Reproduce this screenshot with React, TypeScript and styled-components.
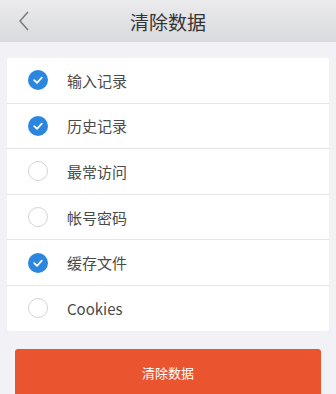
import React, { useState } from 'react';
import styled, { createGlobalStyle } from 'styled-components';

const GlobalStyle = createGlobalStyle`
  html, body {
    margin: 0;
    padding: 0;
    background: #f2f2f6;
    font-family: "Noto Sans CJK SC", Roboto, "Noto Sans", sans-serif;
  }
`;

const Page = styled.div`
  width: 336px;
  height: 394px;
  overflow: hidden;
  background: #f2f2f6;
`;

const Header = styled.header`
  height: 42px;
  display: flex;
  align-items: center;
  justify-content: center;
  position: relative;
  background: linear-gradient(#ebebee, #d9dadd);
`;

const BackButton = styled.button`
  position: absolute;
  left: 12px;
  top: 9px;
  width: 24px;
  height: 24px;
  padding: 0;
  border: none;
  background: none;
  display: flex;
  align-items: center;
  justify-content: center;
`;

const Title = styled.h1`
  margin: 0;
  font-size: 19px;
  font-weight: 400;
  color: #333;
`;

const Card = styled.ul`
  list-style: none;
  margin: 16px 7px 0;
  padding: 0;
  background: #fff;
  border-radius: 2px;
  box-shadow: 0 0 1px rgba(0, 0, 0, 0.06);
`;

const Row = styled.li`
  height: 44.6px;
  display: flex;
  align-items: center;
  padding-left: 21px;
  gap: 19px;
  font-size: 15px;
  color: #4a4a4a;
  cursor: pointer;
  & + & {
    border-top: 1px solid #e6e6e8;
  }
`;

const Check = styled.span<{ $on: boolean }>`
  width: 20px;
  height: 20px;
  border-radius: 50%;
  box-sizing: border-box;
  display: flex;
  align-items: center;
  justify-content: center;
  background: ${(p) => (p.$on ? '#2b86df' : '#fff')};
  border: ${(p) => (p.$on ? 'none' : '1px solid #d4d4d6')};
`;

const ClearButton = styled.button`
  display: block;
  margin: 18px 15px 0;
  width: 306px;
  height: 48px;
  border: none;
  border-radius: 3px;
  background: #ea5530;
  color: #fff;
  font-family: inherit;
  font-size: 13px;
`;

const items = [
  { label: '输入记录', on: true },
  { label: '历史记录', on: true },
  { label: '最常访问', on: false },
  { label: '帐号密码', on: false },
  { label: '缓存文件', on: true },
  { label: 'Cookies', on: false },
];

export default function App() {
  const [state, setState] = useState(items);

  return (
    <Page>
      <GlobalStyle />
      <Header>
        <BackButton>
          <svg width="14" height="22" viewBox="0 0 14 22">
            <path d="M11 2 L3 11 L11 20" fill="none" stroke="#777" strokeWidth="1.4" />
          </svg>
        </BackButton>
        <Title>清除数据</Title>
      </Header>
      <Card>
        {state.map((item, i) => (
          <Row
            key={item.label}
            onClick={() =>
              setState((s) => s.map((x, j) => (j === i ? { ...x, on: !x.on } : x)))
            }
          >
            <Check $on={item.on}>
              {item.on && (
                <svg width="12" height="12" viewBox="0 0 12 12">
                  <path d="M2.2 6.2 L5 8.8 L9.8 3.6" fill="none" stroke="#fff" strokeWidth="1.8" strokeLinecap="round" strokeLinejoin="round" />
                </svg>
              )}
            </Check>
            {item.label}
          </Row>
        ))}
      </Card>
      <ClearButton>清除数据</ClearButton>
    </Page>
  );
}
